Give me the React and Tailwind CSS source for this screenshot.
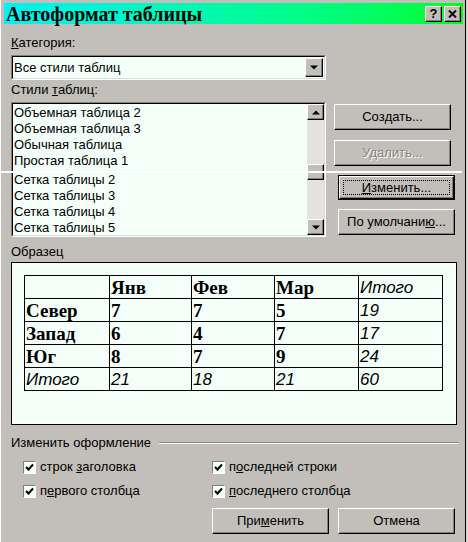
import React from "react";

const raised =
  "border border-t-white border-l-white border-r-black border-b-black shadow-[inset_-1px_-1px_0_#808080]";
const sunken =
  "border border-t-[#808080] border-l-[#808080] border-r-white border-b-white";

function Btn({ children, className = "", disabled = false }) {
  return (
    <div
      className={`h-[26px] w-[117px] bg-[#c2bfba] flex items-center justify-center text-[13px] ${raised} ${
        disabled ? "text-[#8a8782] [text-shadow:1px_1px_0_#ffffff]" : "text-black"
      } ${className}`}
    >
      {children}
    </div>
  );
}

function Arrow({ up }) {
  return (
    <div className={`w-[17px] h-[16px] bg-[#c2bfba] flex items-center justify-center ${raised}`}>
      <svg width="8" height="5" viewBox="0 0 8 5">
        {up ? <polygon points="0,4.5 4,0.5 8,4.5" fill="#000" /> : <polygon points="0,0.5 8,0.5 4,4.5" fill="#000" />}
      </svg>
    </div>
  );
}

function Check({ children, className = "" }) {
  return (
    <div className={`flex items-center gap-[4px] h-[24px] ${className}`}>
      <div className={`w-[13px] h-[13px] bg-[#f5fff9] ${sunken} flex items-center justify-center`}>
        <svg width="9" height="9" viewBox="0 0 9 9">
          <path d="M1 4 L3.5 6.5 L8 1.5" stroke="#000" strokeWidth="2" fill="none" />
        </svg>
      </div>
      <span className="text-[13px]">{children}</span>
    </div>
  );
}

const rows = [
  ["Север", "7", "7", "5", "19"],
  ["Запад", "6", "4", "7", "17"],
  ["Юг", "8", "7", "9", "24"],
];

export default function App() {
  const items = ["Объемная таблица 2", "Объемная таблица 3", "Обычная таблица", "Простая таблица 1"];
  const items2 = ["Сетка таблицы 2", "Сетка таблицы 3", "Сетка таблицы 4", "Сетка таблицы 5"];

  return (
    <div className="relative w-[468px] h-[542px] bg-[#d8d6d2] font-['Liberation_Sans',Arial,sans-serif] text-black">
      <div className="w-[466px] h-[542px] bg-[#c2bfba] border-l border-l-white border-r border-r-black flex flex-col">
        {/* title bar */}
        <div className="mt-[3px] ml-[3px] mr-[2px] h-[21px] bg-gradient-to-r from-[#00f2f2] to-[#00ff00] flex items-center justify-between pl-[2px] pr-[2px]">
          <span className="font-['Liberation_Serif',serif] font-bold text-[20px] leading-none">Автоформат таблицы</span>
          <div className="flex gap-[2px]">
            <div className={`w-[17px] h-[16px] bg-[#c2bfba] ${raised} flex items-center justify-center font-bold text-[13px] leading-none`}>?</div>
            <div className={`w-[17px] h-[16px] bg-[#c2bfba] ${raised} flex items-center justify-center`}>
              <svg width="9" height="8" viewBox="0 0 9 8">
                <path d="M1 0.5 L8 7.5 M8 0.5 L1 7.5" stroke="#000" strokeWidth="2" />
              </svg>
            </div>
          </div>
        </div>

        <div className="pl-[10px] pr-[10px] flex flex-col text-[13px]">
          <div className="mt-[11px] h-[16px] leading-[16px]">
            <span className="underline">К</span>атегория:
          </div>
          <div className={`mt-[4px] w-[315px] h-[25px] ${sunken}`}>
            <div className="h-full border border-t-black border-l-black border-r-[#dcdcdc] border-b-[#dcdcdc] bg-[#f5fff9] flex items-center justify-between pl-[1px] pr-[1px]">
              <span>Все стили таблиц</span>
              <div className={`w-[18px] h-[19px] bg-[#c2bfba] flex items-center justify-center ${raised}`}>
                <svg width="8" height="5" viewBox="0 0 8 5"><polygon points="0,0.5 8,0.5 4,4.5" fill="#000" /></svg>
              </div>
            </div>
          </div>
          <div className="mt-[2px] h-[16px] leading-[16px]">
            Стили <span className="underline">т</span>аблиц:
          </div>

          <div className="mt-[4px] flex gap-[8px]">
            <div className={`w-[315px] h-[135px] ${sunken}`}>
              <div className="h-full border border-t-black border-l-black border-r-[#dcdcdc] border-b-[#dcdcdc] bg-[#f5fff9] flex">
                <div className="flex-1 pl-[1px] pt-[1px]">
                  {items.map((t) => (
                    <div key={t} className="h-[16px] leading-[16px]">{t}</div>
                  ))}
                  <div className="h-[3px]" />
                  {items2.map((t) => (
                    <div key={t} className="h-[16px] leading-[16px]">{t}</div>
                  ))}
                </div>
                <div className="w-[17px] bg-[#e3e2df] flex flex-col">
                  <Arrow up />
                  <div className="flex-1 flex flex-col">
                    <div className="h-[44px]" />
                    <div className={`h-[16px] bg-[#c2bfba] ${raised}`} />
                  </div>
                  <Arrow />
                </div>
              </div>
            </div>

            <div className="flex flex-col pt-[2px]">
              <Btn>
                Соз<span className="underline">д</span>ать...
              </Btn>
              <Btn disabled className="mt-[10px]">Удалить...</Btn>
              <div className="mt-[9px] ml-[4px] w-[117px] h-[25px] border border-black">
                <div className={`h-full bg-[#c2bfba] ${raised} flex items-center justify-center p-[3px]`}>
                  <div className="w-full h-full border border-dotted border-black flex items-center justify-center">
                    <span className="underline">И</span>зменить...
                  </div>
                </div>
              </div>
              <Btn className="mt-[9px] ml-[4px]">
                По умолчани<span className="underline">ю</span>...
              </Btn>
            </div>
          </div>

          <div className="mt-[7px] h-[16px] leading-[16px]">Образец</div>
          <div className="mt-[2px] w-[446px] h-[163px] border border-black bg-[#f5fff9] pl-[12px] pt-[12px]">
            <table className="border-collapse w-[419px] table-fixed">
              <colgroup>
                <col className="w-[85px]" />
                <col className="w-[82px]" />
                <col className="w-[83px]" />
                <col className="w-[84px]" />
                <col className="w-[84px]" />
              </colgroup>
              <tbody>
                <tr className="h-[23px]">
                  <td className="border border-black" />
                  {["Янв", "Фев", "Мар"].map((h) => (
                    <td key={h} className="border border-black px-[1px] font-['Liberation_Serif',serif] font-bold text-[19px] leading-none">{h}</td>
                  ))}
                  <td className="border border-black px-[1px] italic text-[17px] leading-none font-light">Итого</td>
                </tr>
                {rows.map((r) => (
                  <tr key={r[0]} className="h-[23px]">
                    {r.slice(0, 4).map((c, i) => (
                      <td key={i} className="border border-black px-[1px] font-['Liberation_Serif',serif] font-bold text-[19px] leading-none">{c}</td>
                    ))}
                    <td className="border border-black px-[1px] italic text-[17px] leading-none">{r[4]}</td>
                  </tr>
                ))}
                <tr className="h-[23px]">
                  {["Итого", "21", "18", "21", "60"].map((c, i) => (
                    <td key={i} className="border border-black px-[1px] italic text-[17px] leading-none">{c}</td>
                  ))}
                </tr>
              </tbody>
            </table>
          </div>

          <div className="mt-[10px] h-[16px] flex items-center gap-[8px]">
            <span className="leading-[16px]">Изменить оформление</span>
            <div className="flex-1 h-[2px] border-t border-t-[#808080] border-b border-b-white mr-[-3px]" />
          </div>
          <div className="mt-[4px] grid grid-cols-[189px_1fr] pl-[12px]">
            <Check>
              строк <span className="underline">з</span>аголовка
            </Check>
            <Check>
              п<span className="underline">о</span>следней строки
            </Check>
            <Check>
              п<span className="underline">е</span>рвого столбца
            </Check>
            <Check>
              <span className="underline">п</span>оследнего столбца
            </Check>
          </div>
          <div className="mt-[5px] flex gap-[9px] pl-[201px]">
            <Btn>
              При<span className="underline">м</span>енить
            </Btn>
            <Btn>Отмена</Btn>
          </div>
        </div>
      </div>
      {/* scan artifact line in the reference */}
      <div className="absolute left-0 top-[171px] w-[462px] h-[2px] bg-white" />
    </div>
  );
}
